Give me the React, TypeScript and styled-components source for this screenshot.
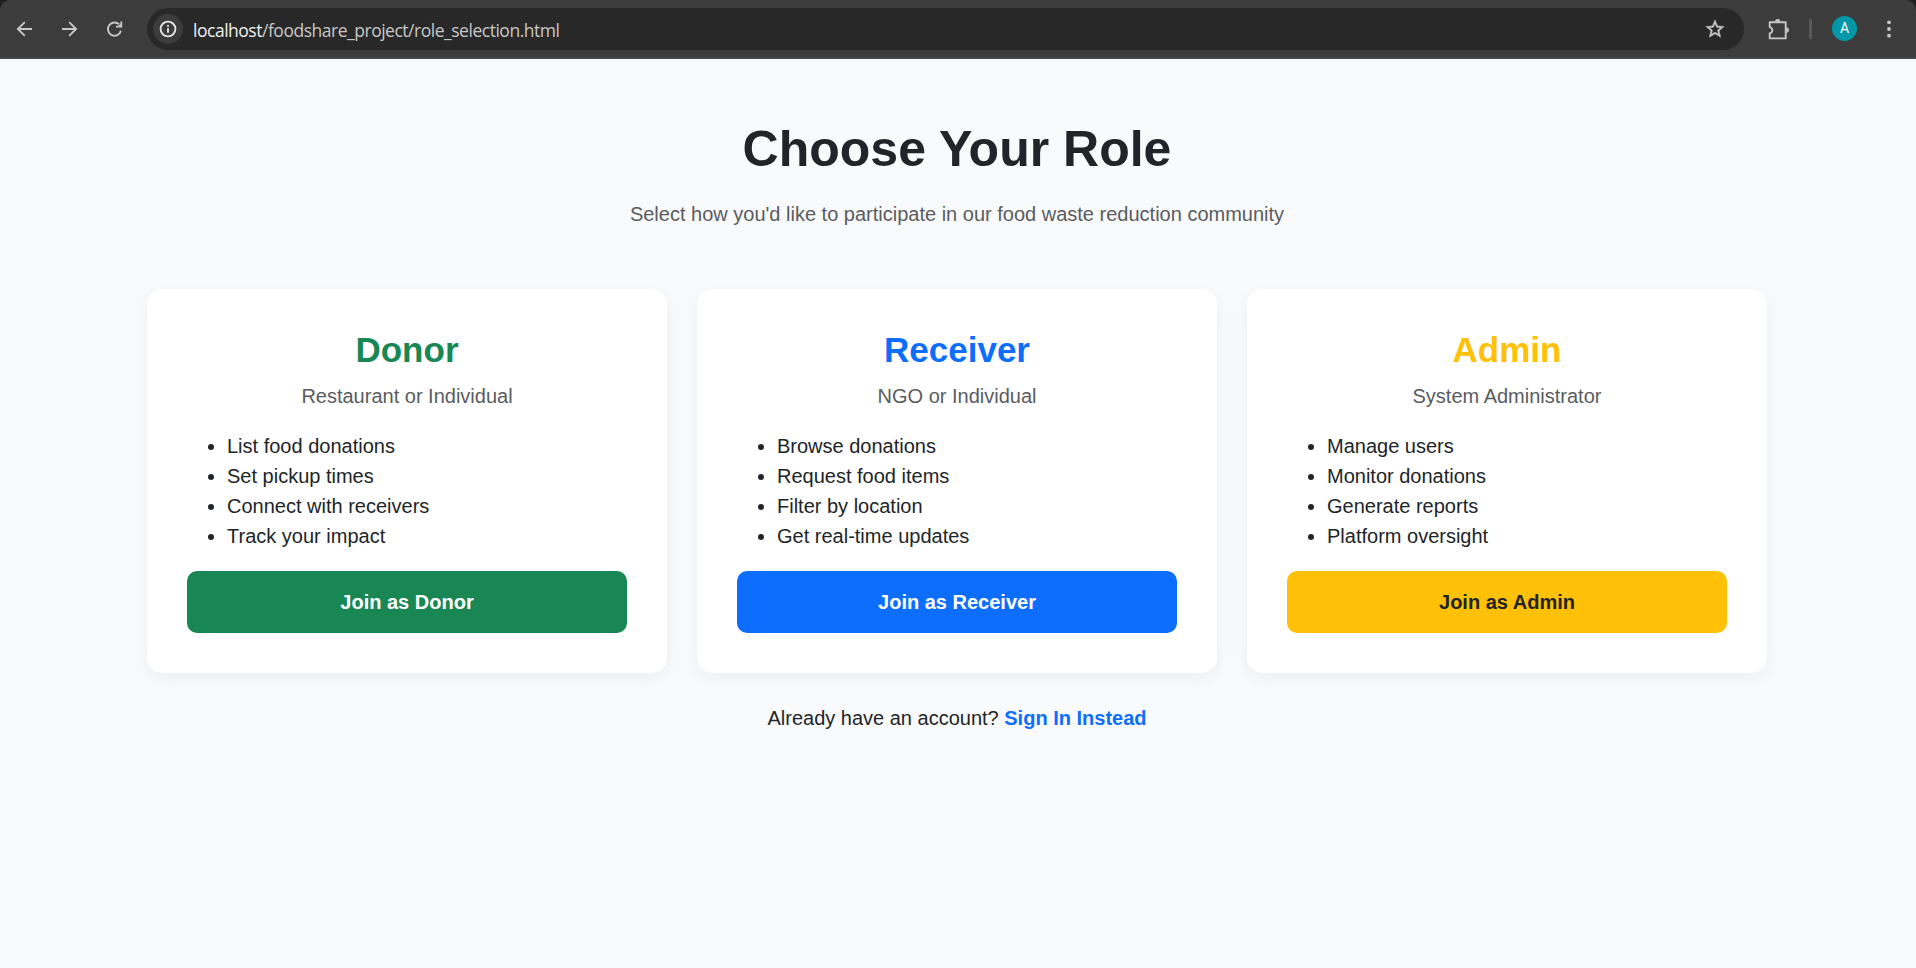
import React from 'react';
import styled, { createGlobalStyle } from 'styled-components';

const GlobalStyle = createGlobalStyle`
  * { box-sizing: border-box; }
  html, body { margin: 0; padding: 0; background: #f9fafc; }
`;

const Window = styled.div`
  height: 968px;
  overflow: hidden;
  background: #f9fafc;
  color: #212529;
  font: 20px/30px "Liberation Sans", Arial, sans-serif;
`;

const TopEdge = styled.div`
  background: #202020;
`;

const Toolbar = styled.header`
  display: flex;
  align-items: center;
  height: 59px;
  padding: 0 13px 0 11px;
  background: #3c3c3c;
  border-bottom: 2px solid #474747;
  border-radius: 10px 10px 0 0;
  color: #c7c7c7;
`;

const NavButtons = styled.nav`
  display: flex;
  gap: 17px;
  width: 136px;
`;

const IconButton = styled.button`
  display: grid;
  place-items: center;
  width: 28px;
  height: 28px;
  padding: 0;
  border: 0;
  background: none;
  color: inherit;
`;

const AddressBar = styled.div`
  display: flex;
  align-items: center;
  flex: 1;
  height: 42px;
  margin-top: 1px;
  padding: 0 15px 0 6px;
  border-radius: 21px;
  background: #282828;
`;

const SiteInfo = styled.span`
  display: grid;
  place-items: center;
  width: 30px;
  height: 30px;
  border-radius: 50%;
  background: #3c3c3c;
  color: #e3e3e3;
`;

const Url = styled.span`
  flex: 1;
  margin-left: 10px;
  padding-top: 1px;
  font: 17.5px/26px "Open Sans", "Noto Sans", sans-serif;
  letter-spacing: -0.48px;
  color: #c7c7c7;
`;

const Host = styled.span`
  color: #f0f0f0;
`;

const Actions = styled.div`
  display: flex;
  align-items: center;
  width: 159px;
  padding-left: 21px;
`;

const Divider = styled.span`
  width: 3px;
  height: 20px;
  margin: 0 20px 0 16px;
  border-radius: 1px;
  background: #5a5a5a;
`;

const Avatar = styled.span`
  display: grid;
  place-items: center;
  width: 25px;
  height: 25px;
  margin-right: 18px;
  border-radius: 50%;
  background: #0097a7;
  color: #fff;
  font: 400 14px/25px Roboto, sans-serif;
`;

const Container = styled.main`
  width: 1620px;
  margin: 0 0 0 147px;
  padding-top: 60px;
  text-align: center;
`;

const PageTitle = styled.h1`
  margin: 0 0 20px;
  font-size: 50px;
  line-height: 60px;
  font-weight: 700;
`;

const Lead = styled.p`
  margin: 0 0 60px;
  color: #595c5f;
`;

const RoleGrid = styled.section`
  display: grid;
  grid-template-columns: repeat(3, 1fr);
  gap: 30px;
`;

const Card = styled.article`
  padding: 40px;
  border-radius: 15px;
  background: #fff;
  box-shadow: 0 5px 18px rgba(0, 0, 0, 0.05);
`;

const RoleName = styled.h2<{ $color: string }>`
  margin: 0 0 10px;
  font-size: 35px;
  line-height: 42px;
  font-weight: 700;
  color: ${(p) => p.$color};
`;

const RoleKind = styled.p`
  margin: 0 0 20px;
  color: #595c5f;
`;

const Features = styled.ul`
  margin: 0 0 20px;
  padding-left: 40px;
  text-align: left;
`;

const JoinButton = styled.button<{ $bg: string; $fg: string }>`
  display: block;
  width: 100%;
  height: 62px;
  padding: 0;
  border: 0;
  border-radius: 10px;
  background: ${(p) => p.$bg};
  color: ${(p) => p.$fg};
  font: inherit;
  font-weight: 700;
`;

const SignIn = styled.p`
  margin: 30px 0 0;
`;

const SignInLink = styled.a`
  color: #0d6efd;
  font-weight: 700;
  text-decoration: none;
`;

const roles = [
  {
    name: 'Donor',
    kind: 'Restaurant or Individual',
    features: ['List food donations', 'Set pickup times', 'Connect with receivers', 'Track your impact'],
    bg: '#198754',
    fg: '#fff',
  },
  {
    name: 'Receiver',
    kind: 'NGO or Individual',
    features: ['Browse donations', 'Request food items', 'Filter by location', 'Get real-time updates'],
    bg: '#0d6efd',
    fg: '#fff',
  },
  {
    name: 'Admin',
    kind: 'System Administrator',
    features: ['Manage users', 'Monitor donations', 'Generate reports', 'Platform oversight'],
    bg: '#ffc107',
    fg: '#212529',
  },
];

const stroke = { fill: 'none', stroke: 'currentColor', strokeWidth: 1.9 };

const BackIcon = () => (
  <svg width="20" height="20" viewBox="0 0 20 20" {...stroke}>
    <path d="M17 10H3.4M9.8 3.1 2.9 10l6.9 6.9" />
  </svg>
);

const ForwardIcon = () => (
  <svg width="20" height="20" viewBox="0 0 20 20" {...stroke}>
    <path d="M2 10h13.6M9.2 3.1l6.9 6.9-6.9 6.9" />
  </svg>
);

const ReloadIcon = () => (
  <svg width="20" height="20" viewBox="0 0 20 20" {...stroke}>
    <path d="M15.9 11.8A6.6 6.6 0 1 1 14.2 5.4" />
    <path fill="currentColor" stroke="none" d="M17.2 2.4V8.6H11V6.8h2.6l1.8-1.8V2.4z" />
  </svg>
);

const InfoIcon = () => (
  <svg width="20" height="20" viewBox="0 0 20 20" {...stroke}>
    <circle cx="10" cy="10" r="7.4" />
    <path d="M10 9.2v4.6M10 6v1.8" />
  </svg>
);

const StarIcon = () => (
  <svg width="22" height="22" viewBox="0 0 24 24" fill="currentColor" stroke="currentColor" strokeWidth="0.5">
    <path d="m22 9.24-7.19-.62L12 2 9.19 8.63 2 9.24l5.46 4.73L5.82 21 12 17.27 18.18 21l-1.63-7.03zM12 15.4l-3.76 2.27 1-4.28-3.32-2.88 4.38-.38L12 6.1l1.71 4.04 4.38.38-3.32 2.88 1 4.28z" />
  </svg>
);

const PuzzleIcon = () => (
  <svg width="22" height="22" viewBox="0 0 22 22" {...stroke}>
    <path
      strokeLinejoin="round"
      d="M1.7 4.2h16v16.2h-16v-4.9c3.5-.9 3.5-5.4 0-6.3z"
    />
    <path fill="currentColor" stroke="none" d="M7 3.6a2.7 2.7 0 0 1 5.4 0zM18.2 9.3a2.7 2.7 0 0 1 0 5.4z" />
  </svg>
);

const MenuIcon = () => (
  <svg width="20" height="20" viewBox="0 0 20 20" fill="currentColor">
    <circle cx="10" cy="3.3" r="1.9" />
    <circle cx="10" cy="10" r="1.9" />
    <circle cx="10" cy="16.7" r="1.9" />
  </svg>
);

export default function App() {
  return (
    <Window>
      <GlobalStyle />
      <TopEdge>
        <Toolbar>
          <NavButtons>
            <IconButton aria-label="Back"><BackIcon /></IconButton>
            <IconButton aria-label="Forward"><ForwardIcon /></IconButton>
            <IconButton aria-label="Reload"><ReloadIcon /></IconButton>
          </NavButtons>
          <AddressBar>
            <SiteInfo><InfoIcon /></SiteInfo>
            <Url><Host>localhost</Host>/foodshare_project/role_selection.html</Url>
            <IconButton aria-label="Bookmark"><StarIcon /></IconButton>
          </AddressBar>
          <Actions>
            <IconButton aria-label="Extensions"><PuzzleIcon /></IconButton>
            <Divider />
            <Avatar>A</Avatar>
            <IconButton aria-label="Menu"><MenuIcon /></IconButton>
          </Actions>
        </Toolbar>
      </TopEdge>
      <Container>
        <PageTitle>Choose Your Role</PageTitle>
        <Lead>Select how you'd like to participate in our food waste reduction community</Lead>
        <RoleGrid>
          {roles.map((role) => (
            <Card key={role.name}>
              <RoleName $color={role.bg}>{role.name}</RoleName>
              <RoleKind>{role.kind}</RoleKind>
              <Features>
                {role.features.map((f) => <li key={f}>{f}</li>)}
              </Features>
              <JoinButton $bg={role.bg} $fg={role.fg}>Join as {role.name}</JoinButton>
            </Card>
          ))}
        </RoleGrid>
        <SignIn>
          Already have an account? <SignInLink>Sign In Instead</SignInLink>
        </SignIn>
      </Container>
    </Window>
  );
}
